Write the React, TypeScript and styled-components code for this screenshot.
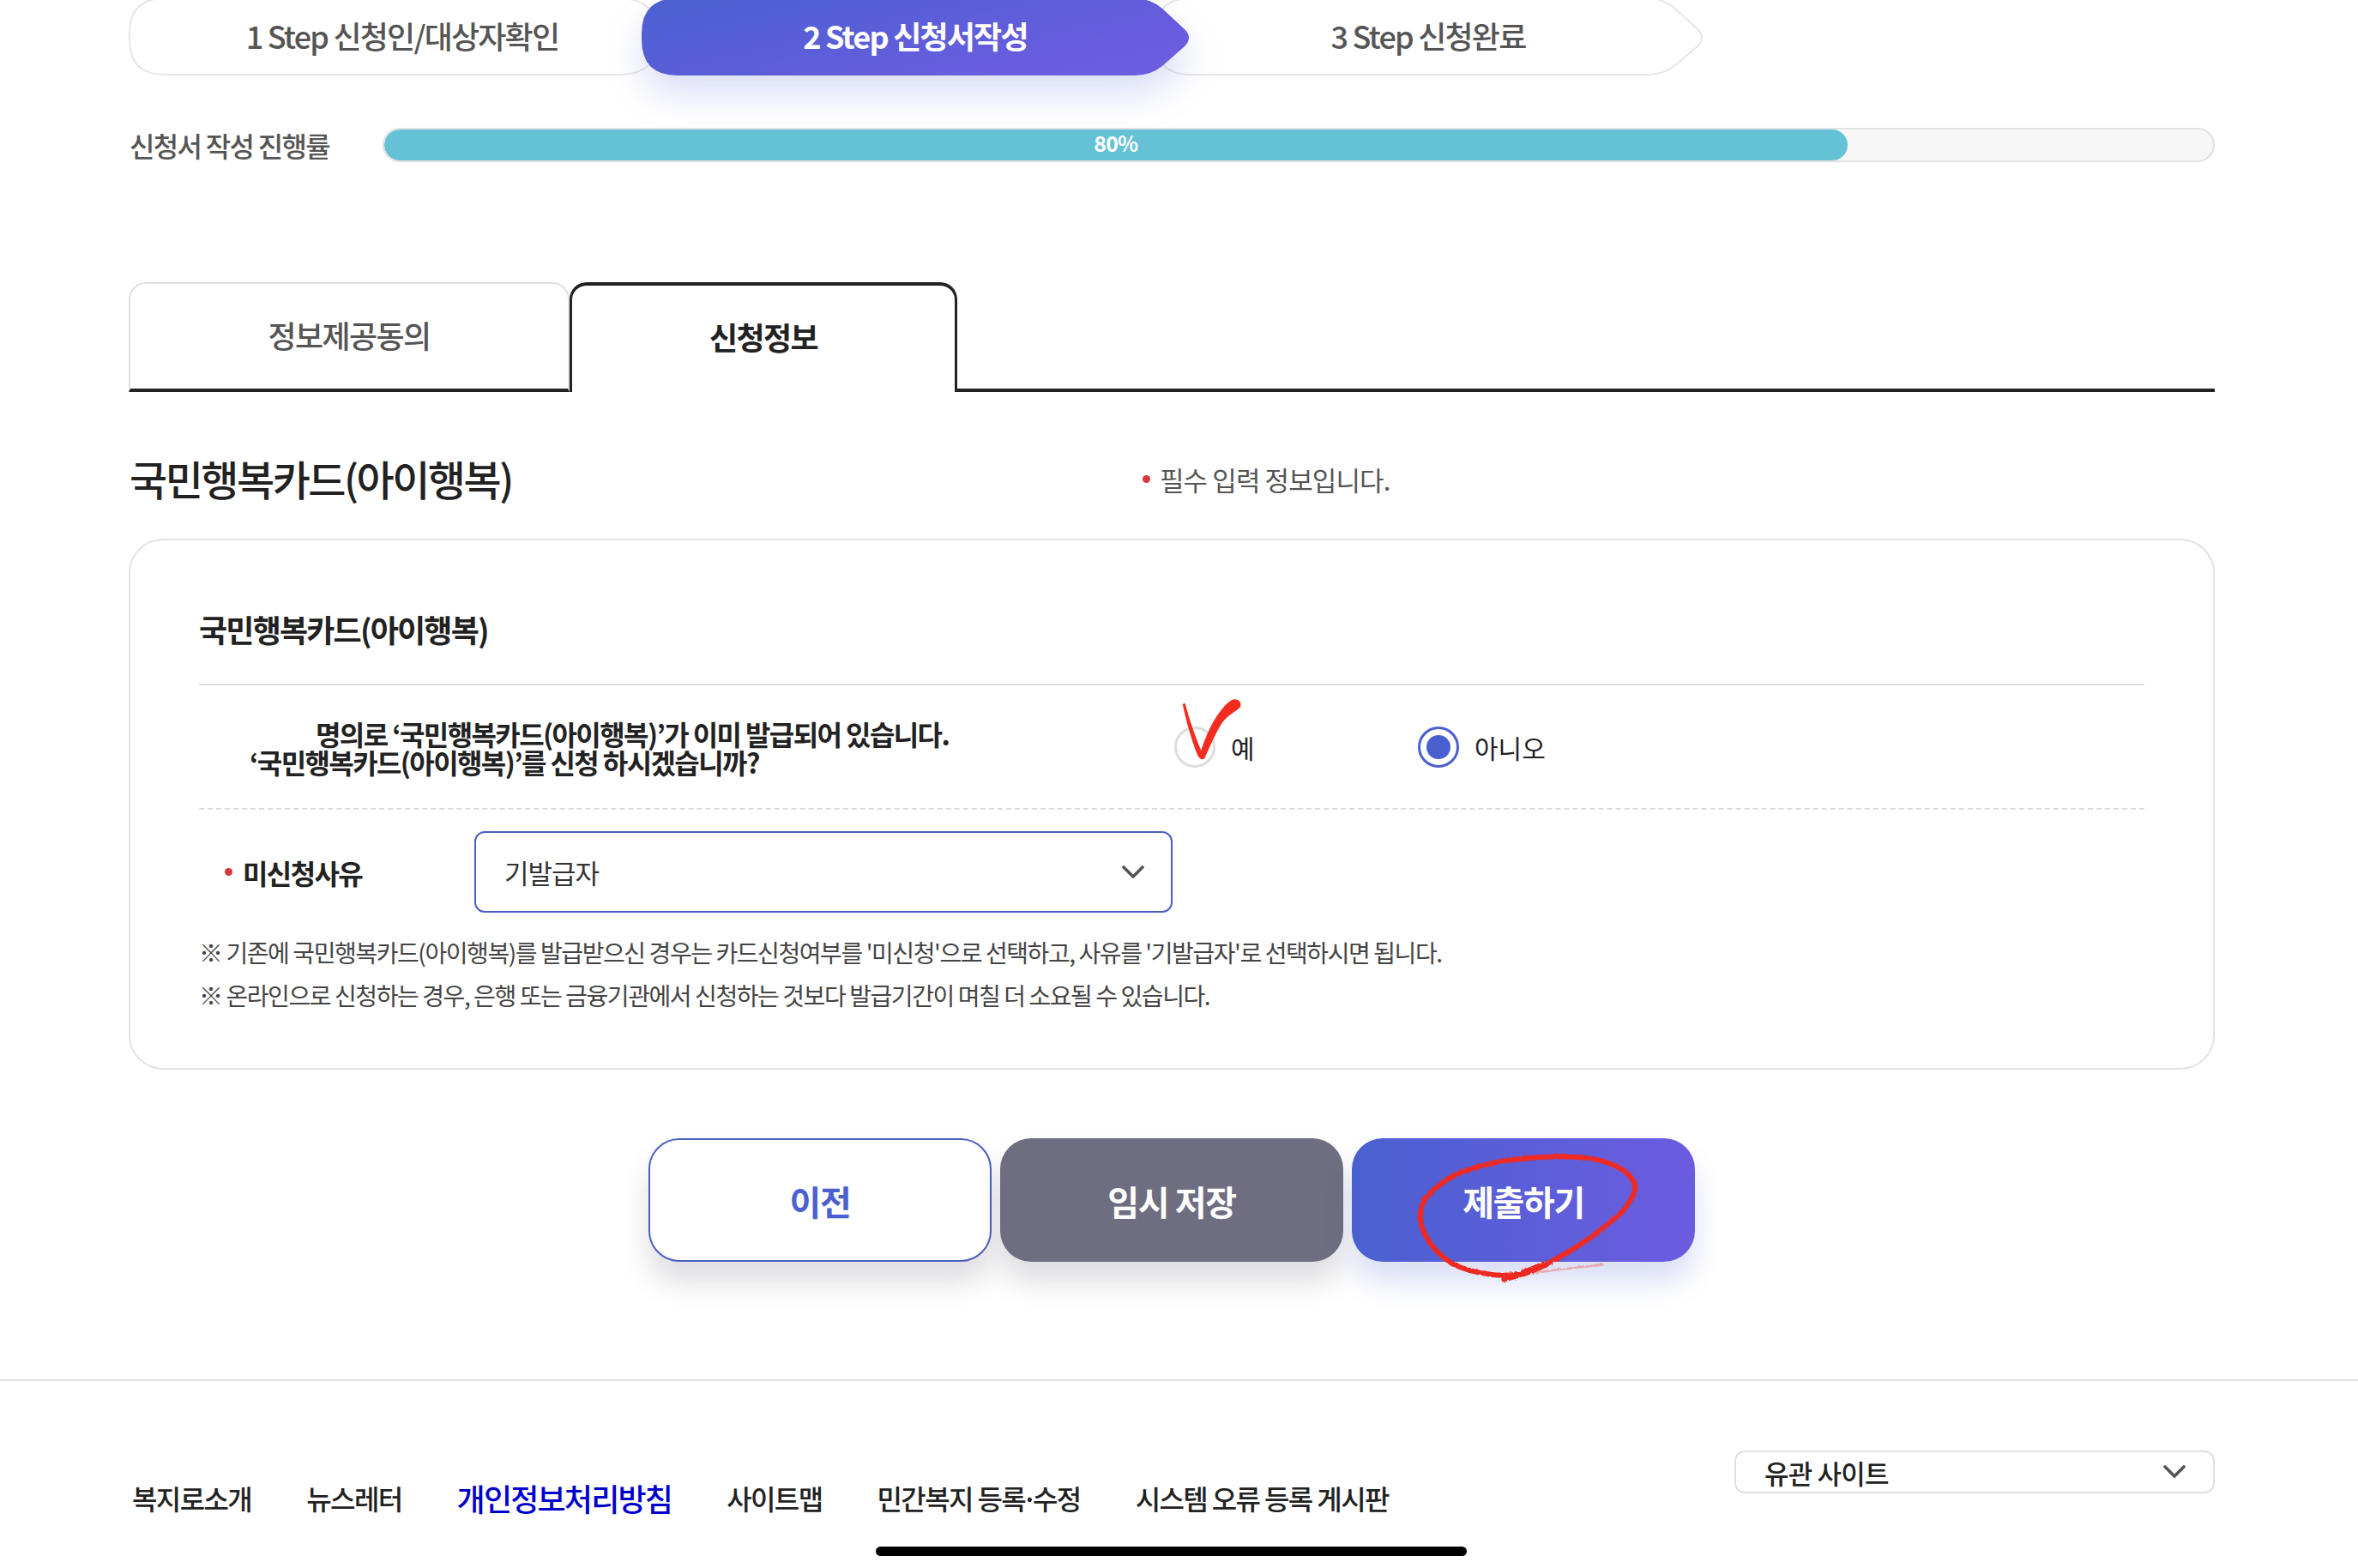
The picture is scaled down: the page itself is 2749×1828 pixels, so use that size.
import React from "react";
import styled, { createGlobalStyle } from "styled-components";

const Global = createGlobalStyle`
  html, body { margin: 0; padding: 0; background: #fff; }
  body { font-family: "Noto Sans CJK KR", "Noto Sans", sans-serif; color: #222; }
  * { box-sizing: border-box; }
`;

const Page = styled.div`
  width: 2749px;
  height: 1828px;
  overflow: hidden;
  background: #fff;
  display: flex;
  flex-direction: column;
`;
const Content = styled.main`
  padding: 0 167px 0 150px;
  display: flex;
  flex-direction: column;
`;
const Steps = styled.ol`
  display: flex;
  list-style: none;
  margin: 0;
  padding: 0;
  height: 88px;
`;
const StepItem = styled.li<{ $active?: boolean }>`
  position: relative;
  width: 641px;
  height: 88px;
  margin-left: -43px;
  padding: 0 3px 6px 0;
  z-index: ${(p) => (p.$active ? 2 : 1)};
  display: flex;
  align-items: center;
  justify-content: center;
  font-size: 36px;
  letter-spacing: -1.8px;
  font-weight: ${(p) => (p.$active ? 700 : 500)};
  color: ${(p) => (p.$active ? "#fff" : "#555")};
  &:first-child { margin-left: 0; }
`;
const StepShape = styled.svg<{ $active?: boolean }>`
  position: absolute;
  left: 0;
  top: 0;
  width: 641px;
  height: 88px;
  overflow: ${(p) => (p.$active ? "visible" : "hidden")};
  filter: ${(p) => (p.$active ? "drop-shadow(0 22px 20px rgba(74,96,208,0.2))" : "none")};
`;
const StepText = styled.span`
  position: relative;
`;
const ProgressRow = styled.div`
  margin-top: 61px;
  display: flex;
  align-items: center;
  height: 40px;
`;
const ProgressLabel = styled.span`
  width: 296px;
  padding-left: 1px;
  font-size: 32px;
  letter-spacing: -1.7px;
  font-weight: 500;
  color: #555;
`;
const Track = styled.div`
  flex: 1;
  height: 40px;
  border-radius: 20px;
  border: 2px solid #e2e2e2;
  background: #f7f7f7;
  overflow: hidden;
`;
const Fill = styled.div`
  height: 100%;
  padding-bottom: 6px;
  background: #65c2d6;
  border-radius: 18px;
  color: #fff;
  font-size: 25px;
  font-weight: 700;
  letter-spacing: -0.8px;
  display: flex;
  align-items: center;
  justify-content: center;
`;
const Tabs = styled.div`
  margin-top: 140px;
  height: 128px;
  display: flex;
`;
const Tab = styled.div`
  width: 514px;
  padding-bottom: 5px;
  border: 2px solid #e0e0e0;
  border-bottom: 4px solid #222;
  border-radius: 20px 20px 0 0;
  display: flex;
  align-items: center;
  justify-content: center;
  font-size: 36px;
  letter-spacing: -1.6px;
  color: #555;
  font-weight: 500;
`;
const ActiveTab = styled.div`
  width: 452px;
  padding-bottom: 7px;
  border: 3px solid #222;
  border-top-width: 4px;
  border-bottom: none;
  border-radius: 20px 20px 0 0;
  display: flex;
  align-items: center;
  justify-content: center;
  font-size: 36px;
  letter-spacing: -1.6px;
  color: #222;
  font-weight: 700;
`;
const TabRest = styled.div`
  flex: 1;
  border-bottom: 4px solid #222;
`;
const TitleRow = styled.div`
  margin-top: 70px;
  height: 60px;
  display: flex;
  align-items: center;
`;
const Title = styled.h2`
  margin: 0;
  width: 1182px;
  padding-left: 1px;
  font-size: 48px;
  font-weight: 500;
  letter-spacing: -2.5px;
  color: #222;
`;
const RequiredNote = styled.span`
  display: flex;
  align-items: center;
  gap: 11px;
  padding-top: 2px;
  font-size: 31px;
  letter-spacing: -0.9px;
  color: #555;
`;
const Dot = styled.i`
  width: 9px;
  height: 9px;
  border-radius: 50%;
  background: #d9383e;
  display: block;
  flex: none;
`;
const Card = styled.section`
  margin-top: 41px;
  border: 2px solid #e2e2e2;
  border-radius: 40px;
  padding: 78px 80px 60px 80px;
`;
const CardHeading = styled.h3`
  margin: 0;
  height: 91px;
  padding-bottom: 41px;
  border-bottom: 2px solid #ddd;
  font-size: 36px;
  line-height: 50px;
  letter-spacing: -1.8px;
  font-weight: 700;
  color: #222;
`;
const QuestionRow = styled.div`
  height: 145px;
  border-bottom: 2px dashed #ddd;
  display: flex;
  align-items: center;
`;
const Question = styled.div`
  width: 1137px;
  padding: 2px 0 0 59px;
  font-size: 32px;
  line-height: 33px;
  font-weight: 700;
  letter-spacing: -1.6px;
  color: #222;
`;
const QuestionFirst = styled.div`
  text-indent: 77px;
`;
const Radios = styled.div`
  display: flex;
`;
const RadioItem = styled.label`
  position: relative;
  width: 284px;
  display: flex;
  align-items: center;
  gap: 18px;
  font-size: 30px;
  color: #222;
`;
const RadioCircle = styled.span<{ $on?: boolean }>`
  width: 48px;
  height: 48px;
  border-radius: 50%;
  border: 3px solid ${(p) => (p.$on ? "#4a60d0" : "#ddd")};
  display: flex;
  align-items: center;
  justify-content: center;
  background: #fff;
  &::after {
    content: "";
    width: 28px;
    height: 28px;
    border-radius: 50%;
    background: ${(p) => (p.$on ? "#4a60d0" : "transparent")};
  }
`;
const CheckMark = styled.svg`
  position: absolute;
  left: -28px;
  top: -47px;
  width: 120px;
  height: 120px;
  pointer-events: none;
`;
const ReasonRow = styled.div`
  margin-top: 25px;
  display: flex;
  align-items: center;
`;
const ReasonLabel = styled.span`
  width: 321px;
  padding-left: 30px;
  display: flex;
  align-items: center;
  gap: 12px;
  font-size: 32px;
  letter-spacing: -1.6px;
  font-weight: 700;
  color: #222;
`;
const SelectBox = styled.div`
  width: 814px;
  height: 95px;
  border: 2px solid #4a60c0;
  border-radius: 12px;
  padding: 0 30px 0 33px;
  display: flex;
  align-items: center;
  justify-content: space-between;
  font-size: 31px;
  letter-spacing: -1px;
  color: #333;
`;
const Notes = styled.div`
  margin-top: 21px;
  font-size: 28px;
  line-height: 50px;
  letter-spacing: -1.42px;
  color: #444;
`;
const Buttons = styled.div`
  margin-top: 80px;
  display: flex;
  justify-content: center;
  gap: 10px;
`;
const Btn = styled.button<{ $kind: "prev" | "save" | "submit" }>`
  position: relative;
  width: 400px;
  height: 144px;
  border-radius: 36px;
  font-family: inherit;
  font-size: 40px;
  font-weight: 700;
  letter-spacing: -1.4px;
  padding: 1px 0 0;
  border: ${(p) => (p.$kind === "prev" ? "2px solid #4a60c0" : "none")};
  color: ${(p) => (p.$kind === "prev" ? "#4a60d0" : "#fff")};
  background: ${(p) =>
    p.$kind === "prev"
      ? "#fff"
      : p.$kind === "save"
      ? "#6e6e80"
      : "linear-gradient(90deg, #4a60d0, #6c5ce0)"};
  box-shadow: 0 24px 32px
    ${(p) => (p.$kind === "submit" ? "rgba(74,96,208,0.2)" : "rgba(60,60,80,0.17)")};
`;
const Scribble = styled.svg`
  position: absolute;
  left: 44px;
  top: 13px;
  width: 340px;
  height: 180px;
  pointer-events: none;
`;
const Footer = styled.footer`
  margin-top: 137px;
  border-top: 2px solid #e0e0e0;
  padding: 81px 167px 0 151px;
  display: flex;
  justify-content: space-between;
  align-items: flex-start;
`;
const FooterNav = styled.nav`
  margin-top: 32px;
  padding-left: 3px;
  display: flex;
  gap: 64px;
`;
const FooterLink = styled.a<{ $hl?: boolean }>`
  font-size: ${(p) => (p.$hl ? "36px" : "32px")};
  height: 46px;
  line-height: 46px;
  letter-spacing: ${(p) => (p.$hl ? "-1.8px" : "-1.6px")};
  font-weight: 500;
  color: ${(p) => (p.$hl ? "#0000cc" : "#222")};
`;
const MiddleDot = styled.span`
  margin: 0 -4px;
`;
const SiteSelect = styled.div`
  width: 560px;
  height: 50px;
  border: 2px solid #e0e0e0;
  border-radius: 12px;
  padding: 0 31px 0 33px;
  display: flex;
  align-items: center;
  justify-content: space-between;
  font-size: 31px;
  letter-spacing: -0.8px;
  font-weight: 500;
  color: #222;
`;
const HomeBar = styled.div`
  margin: 34px 0 0 1021px;
  width: 689px;
  height: 11px;
  border-radius: 6px;
  background: #000;
`;

const Chevron = () => (
  <svg width="28" height="18" viewBox="0 0 28 18" fill="none">
    <path d="M3 3 L14 14 L25 3" stroke="#555" strokeWidth="3.6" strokeLinecap="round" strokeLinejoin="round" />
  </svg>
);

const shapePath =
  "M42 -2 H575 Q593 -2 607 10 L633 34 Q643 44 633 54 L607 76 Q593 87 575 87 H42 Q1 87 1 46 V39 Q1 -2 42 -2 Z";
const activePath =
  "M42 -2 H575 Q593 -2 607 10 L633 34 Q643 44 633 54 L607 77 Q593 88 575 88 H42 Q0 88 0 46 V39 Q0 -2 42 -2 Z";

const Step = ({ label, active, id }: { label: string; active?: boolean; id: string }) => (
  <StepItem $active={active}>
    <StepShape $active={active} viewBox="0 0 641 88">
      <defs>
        <linearGradient id={id} x1="0" y1="0" x2="1" y2="0.6">
          <stop offset="0" stopColor="#4a60d0" />
          <stop offset="1" stopColor="#6c5ce0" />
        </linearGradient>
      </defs>
      <path
        d={active ? activePath : shapePath}
        fill={active ? `url(#${id})` : "#fff"}
        stroke={active ? "none" : "#e6e6e6"}
        strokeWidth="2"
      />
    </StepShape>
    <StepText>{label}</StepText>
  </StepItem>
);

export default function App() {
  return (
    <Page>
      <Global />
      <Content>
        <Steps>
          <Step id="s1" label="1 Step 신청인/대상자확인" />
          <Step id="s2" label="2 Step 신청서작성" active />
          <Step id="s3" label="3 Step 신청완료" />
        </Steps>
        <ProgressRow>
          <ProgressLabel>신청서 작성 진행률</ProgressLabel>
          <Track>
            <Fill style={{ width: "80%" }}>80%</Fill>
          </Track>
        </ProgressRow>
        <Tabs>
          <Tab>정보제공동의</Tab>
          <ActiveTab>신청정보</ActiveTab>
          <TabRest />
        </Tabs>
        <TitleRow>
          <Title>국민행복카드(아이행복)</Title>
          <RequiredNote>
            <Dot />
            필수 입력 정보입니다.
          </RequiredNote>
        </TitleRow>
        <Card>
          <CardHeading>국민행복카드(아이행복)</CardHeading>
          <QuestionRow>
            <Question>
              <QuestionFirst>명의로 ‘국민행복카드(아이행복)’가 이미 발급되어 있습니다.</QuestionFirst>
              <div>‘국민행복카드(아이행복)’를 신청 하시겠습니까?</div>
            </Question>
            <Radios>
              <RadioItem>
                <RadioCircle />
                예
                <CheckMark viewBox="0 0 360 360">
                  <path
                    d="M113 62 L122 60 C135 110 155 170 178 225 C195 170 235 80 285 48 C305 40 322 55 315 72 C300 90 270 100 250 130 C225 170 205 220 190 252 C180 262 170 250 165 240 C145 190 125 120 113 62 Z"
                    fill="#f22c1e"
                  />
                </CheckMark>
              </RadioItem>
              <RadioItem>
                <RadioCircle $on />
                아니오
              </RadioItem>
            </Radios>
          </QuestionRow>
          <ReasonRow>
            <ReasonLabel>
              <Dot />
              미신청사유
            </ReasonLabel>
            <SelectBox>
              기발급자
              <Chevron />
            </SelectBox>
          </ReasonRow>
          <Notes>
            <div>※ 기존에 국민행복카드(아이행복)를 발급받으신 경우는 카드신청여부를 '미신청'으로 선택하고, 사유를 '기발급자'로 선택하시면 됩니다.</div>
            <div>※ 온라인으로 신청하는 경우, 은행 또는 금융기관에서 신청하는 것보다 발급기간이 며칠 더 소요될 수 있습니다.</div>
          </Notes>
        </Card>
        <Buttons>
          <Btn $kind="prev">이전</Btn>
          <Btn $kind="save">임시 저장</Btn>
          <Btn $kind="submit">
            제출하기
            <Scribble viewBox="0 0 1020 540" fill="none">
              <defs>
                <filter id="rough" x="-5%" y="-5%" width="110%" height="110%">
                  <feTurbulence type="fractalNoise" baseFrequency="0.09" numOctaves="2" seed="4" />
                  <feDisplacementMap in="SourceGraphic" scale="9" />
                </filter>
              </defs>
              <g filter="url(#rough)" strokeLinecap="round" stroke="#ef2a20">
                <path
                  d="M400 455 C440 445 500 425 540 405 C600 375 650 345 700 310 C760 265 810 230 835 190 C855 160 865 140 855 115 C835 75 790 50 720 35 C640 20 520 22 400 40 C320 55 260 70 220 95 C170 125 130 155 115 190 C100 225 105 260 125 300 C145 340 180 375 220 400 C260 420 300 430 345 436 C380 442 420 442 470 436"
                  strokeWidth="18"
                />
                <path d="M470 436 C550 425 640 415 745 403" strokeWidth="8" opacity="0.32" />
                <path d="M470 432 C500 420 525 410 545 402" strokeWidth="24" />
              </g>
            </Scribble>
          </Btn>
        </Buttons>
      </Content>
      <Footer>
        <FooterNav>
          <FooterLink>복지로소개</FooterLink>
          <FooterLink>뉴스레터</FooterLink>
          <FooterLink $hl>개인정보처리방침</FooterLink>
          <FooterLink>사이트맵</FooterLink>
          <FooterLink>
            민간복지 등록<MiddleDot>·</MiddleDot>수정
          </FooterLink>
          <FooterLink>시스템 오류 등록 게시판</FooterLink>
        </FooterNav>
        <SiteSelect>
          유관 사이트
          <Chevron />
        </SiteSelect>
      </Footer>
      <HomeBar />
    </Page>
  );
}
